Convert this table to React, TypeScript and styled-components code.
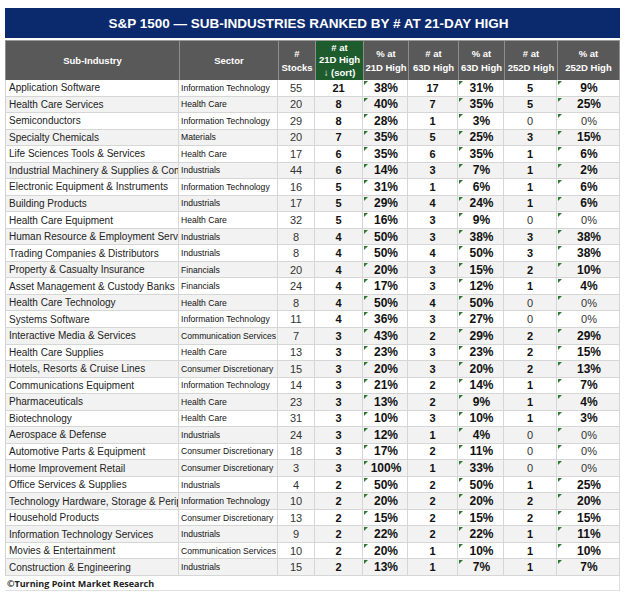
import React from "react";
import styled, { createGlobalStyle, css } from "styled-components";

const Global = createGlobalStyle`
  html, body { margin: 0; padding: 0; background: #ffffff; }
  body { font-family: "Liberation Sans", Arial, sans-serif; color: #1a1a1a; }
`;

const COLS = "174px 99px 37px 48px 45px 50px 46px 53px 63px";

const Sheet = styled.div`
  width: 615px;
  padding: 8px 0 0 5px;
`;

const Title = styled.div`
  height: 30px;
  background: #0b2a6e;
  color: #ffffff;
  font: bold 13.5px "Liberation Sans", Arial, sans-serif;
  display: flex;
  align-items: center;
  justify-content: center;
  padding-right: 8px;
  box-sizing: border-box;
`;

const HeaderRow = styled.div`
  margin-top: 2px;
  height: 40px;
  display: grid;
  grid-template-columns: ${COLS};
  background: #595959;
  border-top: 1px solid #9a9a9a;
  box-sizing: border-box;
`;

const HeadCell = styled.div<{ $sort?: boolean }>`
  display: flex;
  align-items: center;
  justify-content: center;
  text-align: center;
  color: #ffffff;
  font: bold 9.5px/14px "Liberation Sans", Arial, sans-serif;
  border-left: 1px solid #8e8e8e;
  background: ${(p) => (p.$sort ? "#1e5b2d" : "transparent")};
  ${(p) =>
    p.$sort &&
    css`
      line-height: 12.5px;
    `}
  &:last-child {
    border-right: 1px solid #8e8e8e;
  }
`;

const Body = styled.div`
  height: 496px;
  display: grid;
  grid-template-rows: repeat(30, 1fr);
  border-left: 1px solid #d2d2d2;
`;

const Row = styled.div<{ $alt: boolean }>`
  display: grid;
  grid-template-columns: ${COLS};
  margin-left: -1px;
  background: ${(p) => (p.$alt ? "#f2f2f2" : "#ffffff")};
  border-bottom: 1px solid #d6d6d6;
  min-height: 0;
`;

const Cell = styled.div`
  position: relative;
  display: flex;
  align-items: center;
  border-right: 1px solid #d6d6d6;
  overflow: hidden;
  white-space: nowrap;
  min-height: 0;
`;

const NameCell = styled(Cell)`
  font-size: 10px;
  padding-left: 3px;
  color: #222;
  border-left: 1px solid #d2d2d2;
`;

const SectorCell = styled(Cell)`
  font-size: 8.6px;
  padding-left: 2px;
  color: #111;
`;

const NumCell = styled(Cell)<{ $bold?: boolean }>`
  justify-content: center;
  font-size: 11px;
  font-weight: ${(p) => (p.$bold ? "bold" : "normal")};
  color: ${(p) => (p.$bold ? "#111" : "#333")};
`;

const PctCell = styled(Cell)<{ $bold?: boolean }>`
  justify-content: center;
  font-size: ${(p) => (p.$bold ? "12px" : "11px")};
  font-weight: ${(p) => (p.$bold ? "bold" : "normal")};
  color: ${(p) => (p.$bold ? "#111" : "#333")};
  padding-left: 2px;
`;

const Flag = styled.span`
  position: absolute;
  left: 1px;
  top: 1px;
  width: 0;
  height: 0;
  border-top: 4px solid #2f7a32;
  border-right: 4px solid transparent;
`;

const Footer = styled.div`
  height: 14px;
  display: flex;
  align-items: center;
  padding-left: 2px;
  border-bottom: 1px solid #e0e0e0;
  border-right: 1px solid #e0e0e0;
  font: bold 9px "Open Sans", "Liberation Sans", sans-serif;
  color: #222;
`;

type R = [string, string, number, number, string, number, string, number, string];

const rows: R[] = [
  ["Application Software", "Information Technology", 55, 21, "38%", 17, "31%", 5, "9%"],
  ["Health Care Services", "Health Care", 20, 8, "40%", 7, "35%", 5, "25%"],
  ["Semiconductors", "Information Technology", 29, 8, "28%", 1, "3%", 0, "0%"],
  ["Specialty Chemicals", "Materials", 20, 7, "35%", 5, "25%", 3, "15%"],
  ["Life Sciences Tools & Services", "Health Care", 17, 6, "35%", 6, "35%", 1, "6%"],
  ["Industrial Machinery & Supplies & Components", "Industrials", 44, 6, "14%", 3, "7%", 1, "2%"],
  ["Electronic Equipment & Instruments", "Information Technology", 16, 5, "31%", 1, "6%", 1, "6%"],
  ["Building Products", "Industrials", 17, 5, "29%", 4, "24%", 1, "6%"],
  ["Health Care Equipment", "Health Care", 32, 5, "16%", 3, "9%", 0, "0%"],
  ["Human Resource & Employment Services", "Industrials", 8, 4, "50%", 3, "38%", 3, "38%"],
  ["Trading Companies & Distributors", "Industrials", 8, 4, "50%", 4, "50%", 3, "38%"],
  ["Property & Casualty Insurance", "Financials", 20, 4, "20%", 3, "15%", 2, "10%"],
  ["Asset Management & Custody Banks", "Financials", 24, 4, "17%", 3, "12%", 1, "4%"],
  ["Health Care Technology", "Health Care", 8, 4, "50%", 4, "50%", 0, "0%"],
  ["Systems Software", "Information Technology", 11, 4, "36%", 3, "27%", 0, "0%"],
  ["Interactive Media & Services", "Communication Services", 7, 3, "43%", 2, "29%", 2, "29%"],
  ["Health Care Supplies", "Health Care", 13, 3, "23%", 3, "23%", 2, "15%"],
  ["Hotels, Resorts & Cruise Lines", "Consumer Discretionary", 15, 3, "20%", 3, "20%", 2, "13%"],
  ["Communications Equipment", "Information Technology", 14, 3, "21%", 2, "14%", 1, "7%"],
  ["Pharmaceuticals", "Health Care", 23, 3, "13%", 2, "9%", 1, "4%"],
  ["Biotechnology", "Health Care", 31, 3, "10%", 3, "10%", 1, "3%"],
  ["Aerospace & Defense", "Industrials", 24, 3, "12%", 1, "4%", 0, "0%"],
  ["Automotive Parts & Equipment", "Consumer Discretionary", 18, 3, "17%", 2, "11%", 0, "0%"],
  ["Home Improvement Retail", "Consumer Discretionary", 3, 3, "100%", 1, "33%", 0, "0%"],
  ["Office Services & Supplies", "Industrials", 4, 2, "50%", 2, "50%", 1, "25%"],
  ["Technology Hardware, Storage & Peripherals", "Information Technology", 10, 2, "20%", 2, "20%", 2, "20%"],
  ["Household Products", "Consumer Discretionary", 13, 2, "15%", 2, "15%", 2, "15%"],
  ["Information Technology Services", "Industrials", 9, 2, "22%", 2, "22%", 1, "11%"],
  ["Movies & Entertainment", "Communication Services", 10, 2, "20%", 1, "10%", 1, "10%"],
  ["Construction & Engineering", "Industrials", 15, 2, "13%", 1, "7%", 1, "7%"],
];

const Pct: React.FC<{ v: string }> = ({ v }) => (
  <PctCell $bold={v !== "0%"}>
    <Flag />
    {v}
  </PctCell>
);

export default function App() {
  return (
    <>
      <Global />
      <Sheet>
        <Title>S&amp;P 1500 — SUB-INDUSTRIES RANKED BY # AT 21-DAY HIGH</Title>
        <HeaderRow>
          <HeadCell>Sub-Industry</HeadCell>
          <HeadCell>Sector</HeadCell>
          <HeadCell>
            #<br />
            Stocks
          </HeadCell>
          <HeadCell $sort>
            # at
            <br />
            21D High
            <br />↓ (sort)
          </HeadCell>
          <HeadCell>
            % at
            <br />
            21D High
          </HeadCell>
          <HeadCell>
            # at
            <br />
            63D High
          </HeadCell>
          <HeadCell>
            % at
            <br />
            63D High
          </HeadCell>
          <HeadCell>
            # at
            <br />
            252D High
          </HeadCell>
          <HeadCell>
            % at
            <br />
            252D High
          </HeadCell>
        </HeaderRow>
        <Body>
          {rows.map((r, i) => (
            <Row key={r[0]} $alt={i % 2 === 1}>
              <NameCell>{r[0]}</NameCell>
              <SectorCell>{r[1]}</SectorCell>
              <NumCell>{r[2]}</NumCell>
              <NumCell $bold>{r[3]}</NumCell>
              <Pct v={r[4]} />
              <NumCell $bold>{r[5]}</NumCell>
              <Pct v={r[6]} />
              <NumCell $bold={r[7] !== 0}>{r[7]}</NumCell>
              <Pct v={r[8]} />
            </Row>
          ))}
        </Body>
        <Footer>©Turning Point Market Research</Footer>
      </Sheet>
    </>
  );
}
